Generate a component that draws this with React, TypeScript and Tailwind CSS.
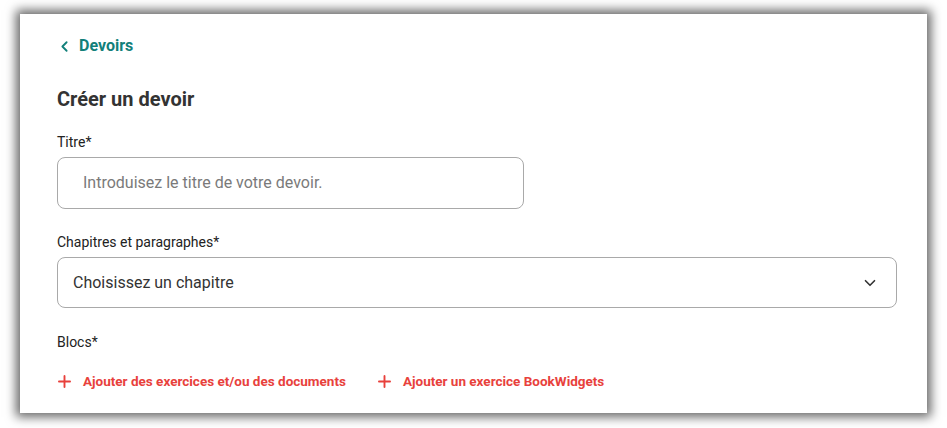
import React from "react";
import { ChevronLeft, ChevronDown, Plus } from "lucide-react";

const AddLink = ({ label }: { label: string }) => {
	return (
		<button className="flex items-center gap-[9px] text-[#e8413c] text-[13.5px] font-bold leading-5">
			<Plus size={19} strokeWidth={2.4} className="-ml-[2px]" />
			<span>{label}</span>
		</button>
	);
};

const App = () => {
	return (
		<div className="w-[947px] h-[428px] bg-white pt-[14px] pl-[20px] font-['Roboto',sans-serif]">
			<div className="w-[907px] h-[399px] bg-white shadow-[0_0_10px_4px_rgba(0,0,0,0.6)] pl-[37px] pr-[30px] pt-[20px]">
				<div className="flex items-center gap-[6px] text-[#13807a] font-bold text-base leading-6">
					<ChevronLeft size={17} strokeWidth={2.6} className="-ml-[1px]" />
					<span>Devoirs</span>
				</div>

				<h1 className="mt-[27px] text-[20px] leading-7 font-bold text-[#333]">
					Créer un devoir
				</h1>

				<div className="mt-[19px]">
					<label className="block text-sm leading-5 text-[#222]">Titre*</label>
					<div className="mt-[5px] w-[467px] h-[52px] border border-[#a9a9a9] rounded-lg flex items-center pl-[25px] text-base text-[#7a7a7a]">
						Introduisez le titre de votre devoir.
					</div>
				</div>

				<div className="mt-[23px]">
					<label className="block text-sm leading-5 text-[#222]">
						Chapitres et paragraphes*
					</label>
					<div className="mt-[5px] w-[840px] h-[51px] border border-[#a9a9a9] rounded-lg flex items-center justify-between pl-[15px] pr-[17px] text-base text-[#333]">
						<span>Choisissez un chapitre</span>
						<ChevronDown size={18} strokeWidth={2.2} className="text-[#333]" />
					</div>
				</div>

				<div className="mt-[24px]">
					<label className="block text-sm leading-5 text-[#222]">Blocs*</label>
					<div className="mt-[19px] flex items-center gap-[31px]">
						<AddLink label="Ajouter des exercices et/ou des documents" />
						<AddLink label="Ajouter un exercice BookWidgets" />
					</div>
				</div>
			</div>
		</div>
	);
};

export default App;
